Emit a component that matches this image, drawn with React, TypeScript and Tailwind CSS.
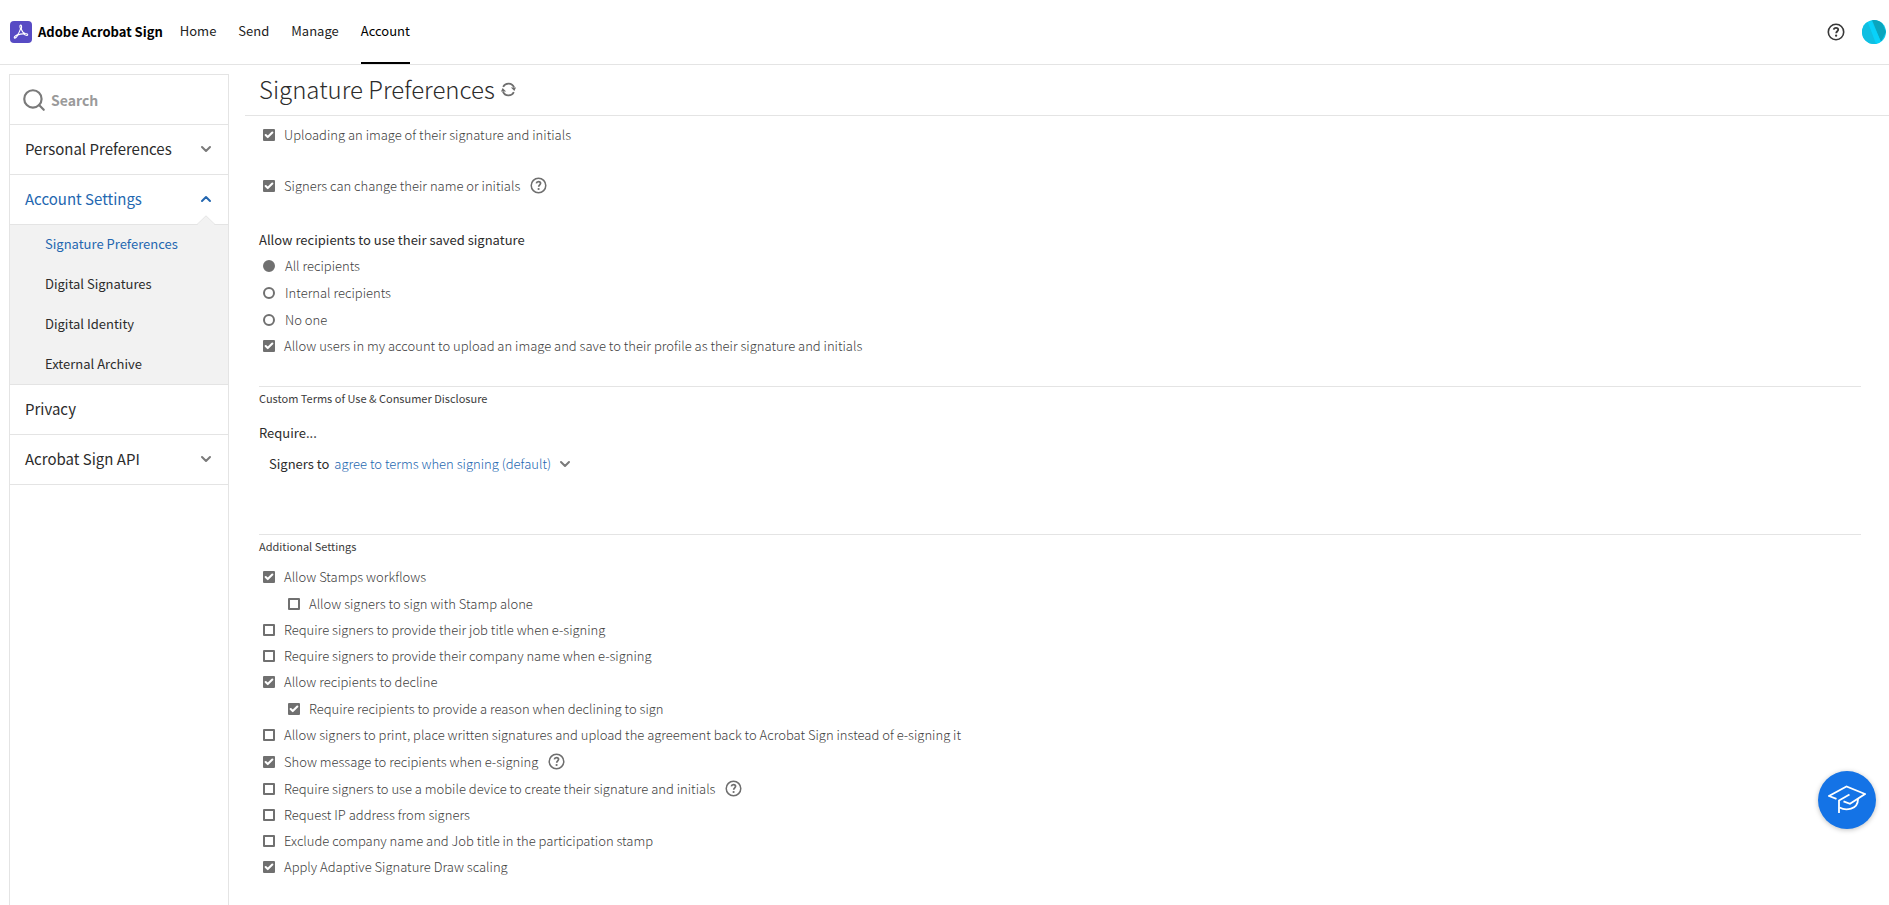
import { useState } from "react";
import clsx from "clsx";
import { Check, ChevronDown, ChevronUp, Search } from "lucide-react";

const navItems = ["Home", "Send", "Manage", "Account"];

const accountLinks = [
  "Signature Preferences",
  "Digital Signatures",
  "Digital Identity",
  "External Archive",
];

const savedSignatureOptions = ["All recipients", "Internal recipients", "No one"];

type Setting = {
  label: string;
  checked?: boolean;
  nested?: boolean;
  help?: boolean;
};

const additionalSettings: Setting[] = [
  { label: "Allow Stamps workflows", checked: true },
  { label: "Allow signers to sign with Stamp alone", nested: true },
  { label: "Require signers to provide their job title when e-signing" },
  { label: "Require signers to provide their company name when e-signing" },
  { label: "Allow recipients to decline", checked: true },
  { label: "Require recipients to provide a reason when declining to sign", checked: true, nested: true },
  { label: "Allow signers to print, place written signatures and upload the agreement back to Acrobat Sign instead of e-signing it" },
  { label: "Show message to recipients when e-signing", checked: true, help: true },
  { label: "Require signers to use a mobile device to create their signature and initials", help: true },
  { label: "Request IP address from signers" },
  { label: "Exclude company name and Job title in the participation stamp" },
  { label: "Apply Adaptive Signature Draw scaling", checked: true },
];

function HelpIcon({ className }: { className?: string }) {
  return (
    <svg viewBox="0 0 18 18" fill="none" stroke="currentColor" className={className}>
      <circle cx="9" cy="9" r="7.7" strokeWidth="1.6" />
      <path d="M6.7 6.7c.2-1.3 1.1-1.9 2.3-1.9s2.2.7 2.2 1.9c0 1.5-2 1.7-2 3.6" strokeWidth="1.8" />
      <circle cx="9.1" cy="12.7" r="1.15" fill="currentColor" stroke="none" />
    </svg>
  );
}

function SettingRow({ label, checked, nested, help }: Setting) {
  const [on, setOn] = useState(!!checked);
  return (
    <div
      className={clsx(
        "flex items-center",
        nested ? "pl-[29px]" : "pl-1",
        nested || help ? "h-[27px]" : "h-[26px]"
      )}
    >
      <label className="flex items-center gap-[9px]">
        <span className="relative flex">
          <input
            type="checkbox"
            checked={on}
            onChange={() => setOn(!on)}
            className="size-3 appearance-none rounded-[1px] border-2 border-[#707070] checked:bg-[#707070]"
          />
          {on && (
            <Check className="pointer-events-none absolute inset-0 size-3 p-px text-white" strokeWidth={5} />
          )}
        </span>
        {label}
      </label>
      {help && (
        <button type="button" aria-label="Help" className="ml-[10px] text-[#6e6e6e]">
          <HelpIcon className="size-[17px]" />
        </button>
      )}
    </div>
  );
}

function Header() {
  return (
    <header className="flex h-[65px] shrink-0 items-center border-b border-[#e4e4e4] pr-[3px] pl-[10px] text-[13px]">
      <a href="#" className="flex items-center gap-[6px] font-bold text-black">
        <svg viewBox="0 0 22 22" className="size-[22px]">
          <rect width="22" height="22" rx="4" fill="#574bc4" />
          <path
            d="M10.3 4.2c1.3-.5 1.6 1.4 1 4 .9 2.4 2.3 4 4 4.3 1.9.1 2.6.5 2.4 1.3-.3 1-2.4.5-4.2-.9-2-.1-3.9.3-5.6 1-1.3 2.3-2.7 3.6-3.4 3.1-.9-.8.7-2.3 3.3-3.5 1.3-2 2.1-3.7 2.7-5.7-.6-1.8-.8-3.3-.2-3.6z"
            fill="none"
            stroke="white"
            strokeWidth="1.1"
          />
        </svg>
        Adobe Acrobat Sign
      </a>
      <nav className="ml-[17px] flex h-full gap-[22px]">
        {navItems.map((item) => (
          <a
            key={item}
            href="#"
            className={clsx(
              "flex h-[64px] items-center border-b-2 text-[#222]",
              item === "Account" ? "border-black text-black" : "border-transparent"
            )}
          >
            {item}
          </a>
        ))}
      </nav>
      <div className="ml-auto flex items-center gap-[17px]">
        <button type="button" aria-label="Help" className="text-[#383838]">
          <HelpIcon className="size-[18px]" />
        </button>
        <button type="button" aria-label="Profile">
          <svg viewBox="0 0 24 24" className="size-6">
            <clipPath id="avatar">
              <circle cx="12" cy="12" r="12" />
            </clipPath>
            <g clipPath="url(#avatar)">
              <rect width="24" height="24" fill="#0dcbf0" />
              <path d="M10 0h9l5 12-5 10z" fill="#0aa5bd" />
              <path d="M3 0l3 3 9 21H0V0z" fill="#10bfe2" />
              <path d="M6 2h4l9 20-5 2z" fill="#08d2fa" />
            </g>
          </svg>
        </button>
      </div>
    </header>
  );
}

function Sidebar() {
  const rowClass = "flex h-[50px] w-full items-center justify-between border-b border-[#e4e4e4] pr-[14px] pb-[2px] pl-[15px]";
  return (
    <aside className="mt-[9px] ml-[9px] w-[220px] shrink-0 border border-b-0 border-[#e4e4e4] text-[15px] text-[#2c2c2c]">
      <label className="flex h-[50px] items-center gap-1 border-b border-[#e4e4e4] pl-[11px]">
        <Search className="size-[26px] shrink-0 text-[#7a7a7a]" strokeWidth={2} />
        <input
          type="text"
          placeholder="Search"
          className="w-full min-w-0 text-[14px] font-bold outline-none placeholder:text-[#9a9a9a]"
        />
      </label>
      <button type="button" className={rowClass}>
        Personal Preferences
        <ChevronDown className="size-4 text-[#7a7a7a]" strokeWidth={3} />
      </button>
      <button type="button" className={clsx(rowClass, "relative text-[#2467b0]")}>
        Account Settings
        <ChevronUp className="size-4" strokeWidth={3} />
        <svg viewBox="0 0 18 10" className="absolute right-[13px] -bottom-px h-[10px] w-[18px]">
          <path d="M0 10L9 1l9 9z" fill="#f2f2f2" />
          <path d="M0 9.5L9 .8l9 8.7" fill="none" stroke="#e4e4e4" />
        </svg>
      </button>
      <ul className="-mt-px border-b border-[#e4e4e4] bg-[#f2f2f2] text-[13px]">
        {accountLinks.map((link, i) => (
          <li key={link}>
            <a
              href="#"
              className={clsx("flex h-10 items-center pl-[35px]", i === 0 && "text-[#2467b0]")}
            >
              {link}
            </a>
          </li>
        ))}
      </ul>
      <a href="#" className={rowClass}>
        Privacy
      </a>
      <button type="button" className={rowClass}>
        Acrobat Sign API
        <ChevronDown className="size-4 text-[#7a7a7a]" strokeWidth={3} />
      </button>
    </aside>
  );
}

export default function App() {
  const [recipients, setRecipients] = useState(savedSignatureOptions[0]);

  return (
    <div className="flex h-screen flex-col overflow-hidden bg-white font-['Noto_Sans_CJK_JP',sans-serif] leading-5 text-[#2c2c2c]">
      <Header />
      <div className="flex min-h-0 flex-1">
        <Sidebar />
        <main className="ml-4 flex min-w-0 flex-1 flex-col">
          <div className="flex h-[51px] shrink-0 items-center gap-[6px] border-b border-[#e4e4e4] pb-[2px] pl-[14px]">
            <h1 className="text-[24px] leading-8 font-light">Signature Preferences</h1>
            <button type="button" aria-label="Refresh" className="text-[#6e6e6e]">
              <svg viewBox="0 0 14 14" className="size-[15px]" fill="none" stroke="currentColor" strokeWidth="1.6">
                <path d="M2 4.5A5.600 5.600 0 0 1 12.200 5M12 9.500A5.600 5.600 0 0 1 1.800 9" />
                <path d="M9.200 5.200H14L12.500 8.400zM4.800 8.800H0L1.500 5.600z" fill="currentColor" stroke="none" />
              </svg>
            </button>
          </div>

          <div className="flex-1 overflow-y-auto pr-7 pl-[14px] text-[13px]">
            <section className="pt-[6px] font-light text-[#404040]">
              <SettingRow label="Uploading an image of their signature and initials" checked />
              <div className="mt-6">
                <SettingRow label="Signers can change their name or initials" checked help />
              </div>
            </section>

            <fieldset className="mt-[31px]">
              <legend className="h-[22px]">Allow recipients to use their saved signature</legend>
              {savedSignatureOptions.map((option) => (
                <label key={option} className="flex h-[27px] items-center gap-[10px] pl-1 font-light text-[#404040]">
                  <input
                    type="radio"
                    name="saved-signature"
                    checked={recipients === option}
                    onChange={() => setRecipients(option)}
                    className="size-3 appearance-none rounded-full border-2 border-[#707070] checked:bg-[#707070]"
                  />
                  {option}
                </label>
              ))}
              <div className="font-light text-[#404040]">
                <SettingRow
                  label="Allow users in my account to upload an image and save to their profile as their signature and initials"
                  checked
                />
              </div>
            </fieldset>

            <section className="mt-[27px] border-t border-[#e4e4e4]">
              <h2 className="pt-px text-[11px] text-[#3c3c3c]">Custom Terms of Use &amp; Consumer Disclosure</h2>
              <p className="mt-[15px]">Require...</p>
              <div className="mt-[11px] flex items-center gap-[5px] pl-[10px]">
                <label htmlFor="terms">Signers to</label>
                <span className="relative flex items-center">
                  <select id="terms" className="h-5 appearance-none pr-[22px] font-light text-[#2467b0] outline-none">
                    <option>agree to terms when signing (default)</option>
                  </select>
                  <ChevronDown className="pointer-events-none absolute right-0 size-4 text-[#7a7a7a]" strokeWidth={3} />
                </span>
              </div>
            </section>

            <section className="mt-[60px] border-t border-[#e4e4e4]">
              <h2 className="pt-px text-[11px] text-[#3c3c3c]">Additional Settings</h2>
              <div className="mt-2 font-light text-[#404040]">
                {additionalSettings.map((setting) => (
                  <SettingRow key={setting.label} {...setting} />
                ))}
              </div>
            </section>
          </div>
        </main>
      </div>

      <button
        type="button"
        aria-label="Learn"
        className="fixed right-[13px] bottom-[76px] flex size-[58px] items-center justify-center rounded-full bg-[#1473e6] shadow-[0_1px_5px_rgba(0,0,0,0.25)]"
      >
        <svg viewBox="0 0 38 30" className="h-[30px] w-[38px]" fill="none" stroke="white" strokeWidth="1.8">
          <path d="M8.5 13.8L1 11 18.5 1.5 37 9 22 18.8 15.5 16.3" />
          <path d="M21.5 9.5L11 15.5V28" />
          <path d="M11.5 22.5c6 3.6 18.5 2.5 18.5-8.5" />
        </svg>
      </button>
    </div>
  );
}
